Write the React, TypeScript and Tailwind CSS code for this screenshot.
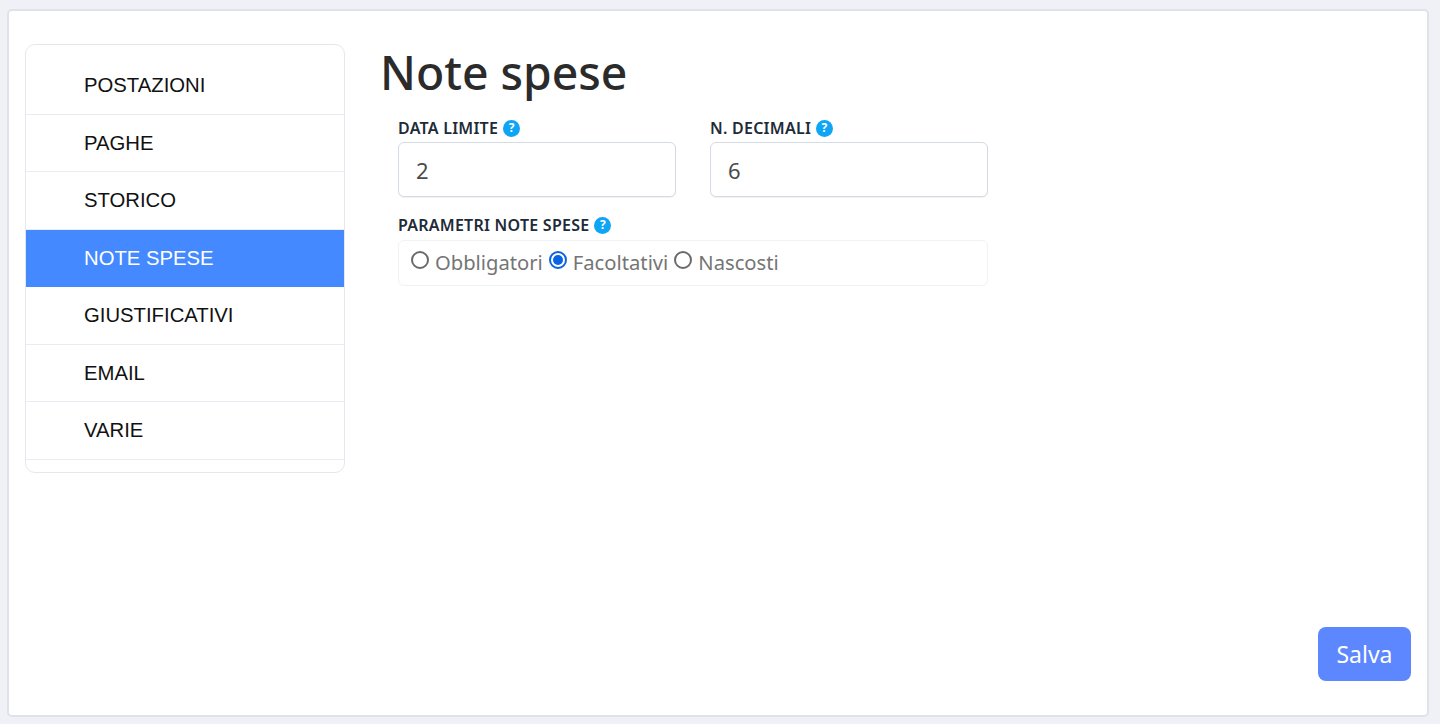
import React from "react";

const menu = ["POSTAZIONI", "PAGHE", "STORICO", "NOTE SPESE", "GIUSTIFICATIVI", "EMAIL", "VARIE"];

function Help() {
  return (
    <span className="inline-flex h-[17px] w-[17px] shrink-0 items-center justify-center rounded-full bg-[#0ea5f5] text-[12px] font-bold leading-none text-white">
      ?
    </span>
  );
}

function Field({ label, value }: { label: string; value: string }) {
  return (
    <div className="w-[278px]">
      <div className="flex h-[24px] items-center gap-[5px] text-[16px] font-semibold tracking-[0.25px] text-[#212a37]">
        {label} <Help />
      </div>
      <div className="mt-[2px] flex h-[55px] items-center rounded-[6px] border border-[#d5dbe3] bg-white px-[17px] pt-[1px] text-[22px] text-[#4b4b4b] shadow-[0_1px_1px_rgba(0,0,0,0.06)]">
        {value}
      </div>
    </div>
  );
}

function Radio({ label, checked }: { label: string; checked?: boolean }) {
  return (
    <div className="flex items-center gap-[6px]">
      {checked ? (
        <span className="mb-[5px] h-[18px] w-[18px] rounded-full border-[2px] border-[#0a63e0] p-[2px]">
          <span className="block h-full w-full rounded-full bg-[#0a63e0]" />
        </span>
      ) : (
        <span className="mb-[5px] h-[18px] w-[18px] rounded-full border-[2px] border-[#6b6b6b] bg-white" />
      )}
      <span className="mb-[2px]">{label}</span>
    </div>
  );
}

export default function App() {
  return (
    <div className="h-[724px] bg-[#eff1f7] pb-[7px] pl-[7px] pr-[11px] pt-[9px] font-['Noto_Sans',sans-serif]">
      <div className="flex h-[708px] flex-col rounded-[5px] border-2 border-[#dfe2ea] bg-white">
        <div className="flex flex-1 items-start pl-[16px] pt-[33px]">
          <ul className="w-[320px] rounded-[10px] border border-[#e4e7ee] pb-[12px] pt-[12px] font-['Liberation_Sans',sans-serif] text-[20.3px] text-[#111]">
            {menu.map((m) => (
              <li
                key={m}
                className={
                  m === "NOTE SPESE"
                    ? "flex h-[57.5px] items-center bg-[#4489ff] pl-[58px] text-white"
                    : "flex h-[57.5px] items-center border-b border-[#e9ecf2] pl-[58px]"
                }
              >
                <span className="mt-[0.2px]">{m}</span>
              </li>
            ))}
          </ul>
          <div className="ml-[35px]">
            <h1 className="mt-[1px] text-[46.3px] font-medium leading-[56px] text-[#2b2b2b]">Note spese</h1>
            <div className="ml-[18px] mt-[15px]">
              <div className="flex gap-[34px]">
                <Field label="DATA LIMITE" value="2" />
                <Field label="N. DECIMALI" value="6" />
              </div>
              <div className="mt-[16px] flex h-[24px] items-center gap-[5px] text-[16px] font-semibold tracking-[0.25px] text-[#212a37]">
                PARAMETRI NOTE SPESE <Help />
              </div>
              <div className="mt-[3px] flex h-[46px] w-[590px] items-center gap-[6px] rounded-[6px] border border-[#f0f2f6] px-[12px] text-[20.2px] text-[#757575]">
                <Radio label="Obbligatori" />
                <Radio label="Facoltativi" checked />
                <Radio label="Nascosti" />
              </div>
            </div>
          </div>
        </div>
        <div className="flex justify-end pb-[34px] pr-[16px]">
          <button className="flex h-[54px] w-[93px] items-center justify-center rounded-[8px] bg-[#5c87ff] text-[23px] text-white">
            Salva
          </button>
        </div>
      </div>
    </div>
  );
}
